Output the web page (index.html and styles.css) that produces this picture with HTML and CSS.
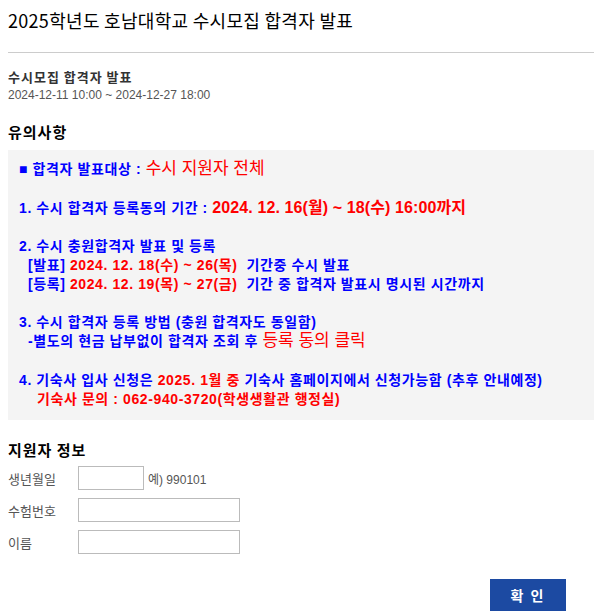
FILE: index.html
```html
<!DOCTYPE html>
<html>
	<head>
		<meta charset="UTF-8">
		<title>2025학년도 호남대학교 수시모집 합격자 발표</title>
		<link rel="stylesheet" href="styles.css">
	</head>
	<body>
		<div class="wrap">
			<h1 class="title">2025학년도 호남대학교 수시모집 합격자 발표</h1>
			<div class="line"></div>

			<div class="info">
				<p class="info-name">수시모집 합격자 발표</p>
				<p class="info-date">2024-12-11 10:00 ~ 2024-12-27 18:00</p>
			</div>

			<h2 class="sub-title">유의사항</h2>
			<div class="notice">
				<p class="first">■ 합격자 발표대상 : <span class="big">수시 지원자 전체</span></p>
				<p class="p2">1. 수시 합격자 등록동의 기간 : <span class="red b16">2024. 12. 16(월) ~ 18(수) 16:00까지</span></p>
				<p>
					2. 수시 충원합격자 발표 및 등록<br>
					&nbsp;&nbsp;[발표] <span class="red">2024. 12. 18(수) ~ 26(목)</span>&nbsp; 기간중 수시 발표<br>
					&nbsp;&nbsp;[등록] <span class="red">2024. 12. 19(목) ~ 27(금)</span>&nbsp; 기간 중 합격자 발표시 명시된 시간까지
				</p>
				<p class="p4">
					3. 수시 합격자 등록 방법 (충원 합격자도 동일함)<br>
					&nbsp;&nbsp;-별도의 현금 납부없이 합격자 조회 후 <span class="big">등록 동의 클릭</span>
				</p>
				<p class="last">
					4. 기숙사 입사 신청은 <span class="red">2025. 1월 중</span> 기숙사 홈페이지에서 신청가능함 (추후 안내예정)<br>
					<span class="red">&nbsp;&nbsp;&nbsp; 기숙사 문의 : 062-940-3720(학생생활관 행정실)</span>
				</p>
			</div>

			<h2 class="sub-title form-title">지원자 정보</h2>
			<div class="form">
				<div class="row">
					<label>생년월일</label>
					<input type="text" class="short" />
					<span class="hint">예) 990101</span>
				</div>
				<div class="row">
					<label>수험번호</label>
					<input type="text" />
				</div>
				<div class="row">
					<label>이름</label>
					<input type="text" />
				</div>
			</div>
			<div class="btn-area">
				<button class="btn-ok">확 인</button>
			</div>
		</div>
	</body>
</html>
```
FILE: styles.css
```css
body{
	margin: 0;
	font-family: "Noto Sans CJK KR", "Liberation Sans", sans-serif;
	color: #333;
}
.wrap{
	padding-left: 8px;
}
.title{
	margin: 0;
	padding-top: 9px;
	font-size: 18px;
	line-height: 22px;
	font-weight: normal;
	letter-spacing: 0.3px;
	color: #000;
}
.line{
	height: 1px;
	background-color: #ccc;
	margin-top: 21px;
}
.info{
	padding-top: 14px;
}
.info p{
	margin: 0;
	font-size: 12px;
	line-height: 19px;
}
.info .info-name{
	font-size: 13px;
	letter-spacing: 1px;
	font-weight: bold;
	color: #333;
}
.info-date{
	color: #555;
	font-family: "Liberation Sans", "Noto Sans CJK KR", sans-serif;
}
.sub-title{
	margin: 0;
	font-size: 15px;
	line-height: 20px;
	letter-spacing: 1px;
	color: #000;
}
.info + .sub-title{
	margin-top: 17px;
}
.notice{
	margin-top: 8px;
	background-color: #f4f4f4;
	padding: 9px 11px 11px;
	color: #0000ff;
	font-family: "Liberation Sans", "Noto Sans CJK KR", sans-serif;
	font-size: 14px;
	font-weight: bold;
	letter-spacing: 0.6px;
	line-height: 19px;
}
.notice p{
	margin: 0 0 19px;
}
.notice .first{
	line-height: 20px;
	margin-bottom: 20px;
}
.notice .p4{
	margin-bottom: 20px;
}
.notice .last{
	margin-bottom: 0;
}
.red{
	color: #ff0000;
}
.big{
	color: #ff0000;
	font-weight: normal;
	font-size: 17px;
	letter-spacing: 0;
	line-height: 1;
}
.b16{
	font-size: 16px;
	letter-spacing: 0.1px;
	line-height: 1;
}
.form-title{
	margin-top: 20px;
}
.form{
	padding-top: 6px;
}
.row{
	display: flex;
	align-items: center;
	height: 24px;
	margin-bottom: 8px;
	font-size: 13px;
	color: #555;
}
.row label{
	width: 70px;
}
.row input{
	box-sizing: border-box;
	width: 162px;
	height: 24px;
	border: 1px solid #bbb;
	margin: 0;
	padding: 0 4px;
}
.row input.short{
	width: 66px;
}
.hint{
	margin-left: 4px;
	font-family: "Liberation Sans", "Noto Sans CJK KR", sans-serif;
	font-size: 12px;
}
.btn-area{
	display: flex;
	justify-content: flex-end;
	padding-right: 28px;
	margin-top: 25px;
}
.btn-ok{
	width: 76px;
	height: 32px;
	border: none;
	background-color: #1c4aa2;
	color: #fff;
	font-family: "Noto Sans CJK KR", sans-serif;
	font-size: 14px;
	font-weight: bold;
	letter-spacing: 2px;
}
```
